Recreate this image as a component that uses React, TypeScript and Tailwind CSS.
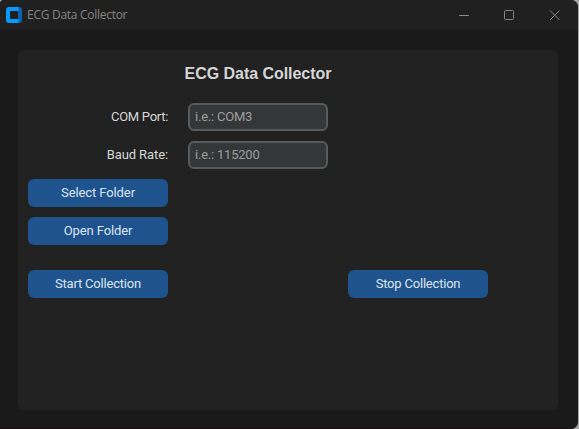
import type { ReactNode } from "react";

function AppIcon() {
  return (
    <svg width="16" height="16" viewBox="0 0 16 16" className="shrink-0">
      <path fill="#0b62b4" d="M11 0H13Q16 0 16 3V13Q16 16 13 16H11L12 12V4Z" />
      <path fillRule="evenodd" fill="#0799ff" d="M3 0H12.500V4H5Q4 4 4 5V11Q4 12 5 12H12.500V16H3Q0 16 0 13V3Q0 0 3 0Z" />
    </svg>
  );
}

function TitleBar() {
  return (
    <header className="flex h-[30px] shrink-0 items-center bg-[#202020] pl-[6px] pb-[1px] text-[#858585]">
      <AppIcon />
      <span className="ml-[5px] flex-1 whitespace-nowrap font-['Open_Sans','Noto_Sans',sans-serif] text-[12px] leading-4 tracking-[-0.28px]">
        ECG Data Collector
      </span>
      <svg width="130" height="28" viewBox="0 0 130 28" fill="none" stroke="#858585" className="shrink-0">
        <path d="M11 14.5H21" />
        <rect x="56.5" y="9.5" width="9" height="9" rx="1" />
        <path d="M102 9.500L111.500 19M111.500 9.500L102 19" />
      </svg>
    </header>
  );
}

function Field({ label, placeholder }: { label: ReactNode; placeholder: string }) {
  return (
    <div className="flex h-7 items-center gap-5">
      <label className="w-[140px] text-right text-[#d6d6d6]">{label}</label>
      <input
        placeholder={placeholder}
        className="h-7 w-[140px] rounded-[6px] border-2 border-[#565b5e] bg-[#343638] px-[5px] pb-[2px] tracking-[-0.22px] text-[#d6d6d6] outline-none placeholder:text-[#9e9e9e]"
      />
    </div>
  );
}

function Button({ children }: { children: ReactNode }) {
  return (
    <button className="h-7 w-[140px] rounded-[6px] bg-[#1f538d] pb-px text-[#dce4ee]">{children}</button>
  );
}

export default function App() {
  return (
    <div className="h-[429px] w-[579px] overflow-hidden bg-[#a5a5a5] pr-px font-[Roboto,sans-serif] text-[13px]">
      <div className="flex h-full flex-col overflow-hidden rounded-r-[7px] rounded-tl-[4px] border-b border-[#180d12] bg-[#1a1a1a]">
        <TitleBar />
        <main className="mr-5 ml-[18px] mt-5 flex h-[360px] flex-col rounded-[6px] bg-[#212121] px-[10px]">
          <h1 className="mt-[14px] mb-[19px] h-5 w-[460px] text-center font-['Liberation_Sans',Arial,sans-serif] text-[16px] leading-5 font-bold tracking-[-0.04px] text-[#d6d6d6]">
            ECG Data Collector
          </h1>
          <div className="flex flex-col items-start gap-[10px]">
            <Field label={<span className="tracking-[-0.3px]">COM Port:</span>} placeholder="i.e.: COM3" />
            <Field label={<span className="tracking-[-0.1px]">Baud Rate:</span>} placeholder="i.e.: 115200" />
            <Button><span className="tracking-[-0.1px]">Select Folder</span></Button>
            <Button><span className="tracking-[-0.1px]">Open Folder</span></Button>
          </div>
          <div className="mt-[25px] flex gap-[180px]">
            <Button><span className="tracking-[-0.2px]">Start Collection</span></Button>
            <Button><span className="tracking-[-0.2px]">Stop Collection</span></Button>
          </div>
        </main>
      </div>
    </div>
  );
}
